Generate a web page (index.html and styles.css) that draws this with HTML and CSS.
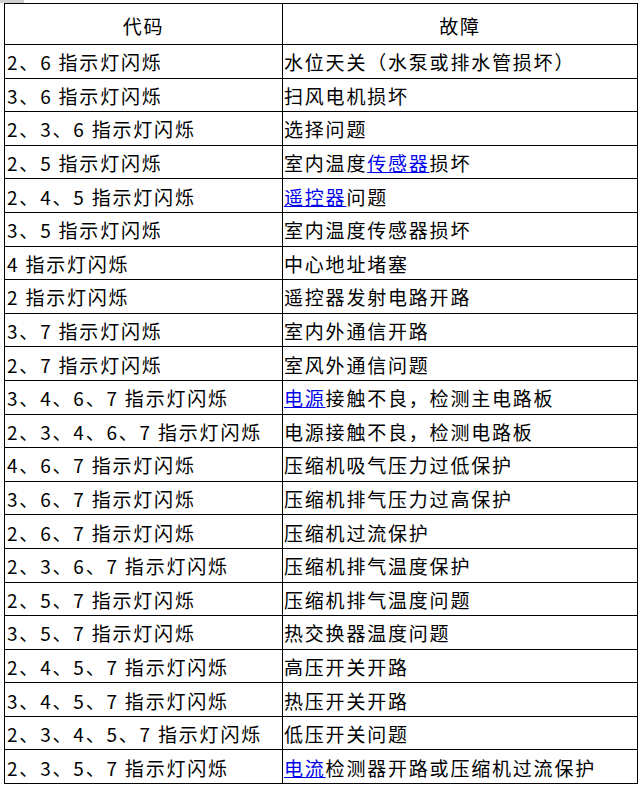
FILE: index.html
```html
<!DOCTYPE html>
<html lang="zh-CN">
<head>
<meta charset="utf-8">
<title>故障代码</title>
<link rel="stylesheet" href="styles.css">
</head>
<body>
<div class="tab-mark"></div>
<table class="fault-table">
  <colgroup><col class="col-code"><col class="col-fault"></colgroup>
  <thead>
    <tr><th>代码</th><th>故障</th></tr>
  </thead>
  <tbody>
    <tr><td>2、6 指示灯闪烁</td><td>水位天关（水泵或排水管损坏）</td></tr>
    <tr><td>3、6 指示灯闪烁</td><td>扫风电机损坏</td></tr>
    <tr><td>2、3、6 指示灯闪烁</td><td>选择问题</td></tr>
    <tr><td>2、5 指示灯闪烁</td><td>室内温度<a href="#">传感器</a>损坏</td></tr>
    <tr><td>2、4、5 指示灯闪烁</td><td><a href="#">遥控器</a>问题</td></tr>
    <tr><td>3、5 指示灯闪烁</td><td>室内温度传感器损坏</td></tr>
    <tr><td>4 指示灯闪烁</td><td>中心地址堵塞</td></tr>
    <tr><td>2 指示灯闪烁</td><td>遥控器发射电路开路</td></tr>
    <tr><td>3、7 指示灯闪烁</td><td>室内外通信开路</td></tr>
    <tr><td>2、7 指示灯闪烁</td><td>室风外通信问题</td></tr>
    <tr><td>3、4、6、7 指示灯闪烁</td><td><a href="#">电源</a>接触不良，检测主电路板</td></tr>
    <tr><td>2、3、4、6、7 指示灯闪烁</td><td>电源接触不良，检测电路板</td></tr>
    <tr><td>4、6、7 指示灯闪烁</td><td>压缩机吸气压力过低保护</td></tr>
    <tr><td>3、6、7 指示灯闪烁</td><td>压缩机排气压力过高保护</td></tr>
    <tr><td>2、6、7 指示灯闪烁</td><td>压缩机过流保护</td></tr>
    <tr><td>2、3、6、7 指示灯闪烁</td><td>压缩机排气温度保护</td></tr>
    <tr><td>2、5、7 指示灯闪烁</td><td>压缩机排气温度问题</td></tr>
    <tr><td>3、5、7 指示灯闪烁</td><td>热交换器温度问题</td></tr>
    <tr><td>2、4、5、7 指示灯闪烁</td><td>高压开关开路</td></tr>
    <tr><td>3、4、5、7 指示灯闪烁</td><td>热压开关开路</td></tr>
    <tr><td>2、3、4、5、7 指示灯闪烁</td><td>低压开关问题</td></tr>
    <tr><td>2、3、5、7 指示灯闪烁</td><td><a href="#">电流</a>检测器开路或压缩机过流保护</td></tr>
  </tbody>
</table>
</body>
</html>
```

FILE: styles.css
```css
html, body {
  margin: 0;
  padding: 0;
  background: #fff;
}
body {
  font-family: "Noto Sans CJK SC", "Noto Sans", sans-serif;
  color: #000;
}
.tab-mark {
  width: 24px;
  height: 3px;
  background: #cfcfcf;
}
.fault-table {
  margin-left: 4px;
  border-collapse: collapse;
  table-layout: fixed;
  width: 633px;
  font-size: 19px;
  letter-spacing: 1.8px;
  line-height: 1;
}
.col-code { width: 278px; }
.col-fault { width: 355px; }
.fault-table th,
.fault-table td {
  border: 1px solid #000;
  padding: 0 2px;
  vertical-align: middle;
  white-space: nowrap;
  overflow: hidden;
}
.fault-table th {
  height: 37px;
  padding-top: 3px;
  font-weight: normal;
  text-align: center;
}
.fault-table td {
  height: 31.6px;
  padding-top: 1px;
  text-align: left;
}
.fault-table td + td {
  padding-left: 1px;
}
.fault-table a {
  color: #0000ee;
  text-decoration: underline;
}
```
